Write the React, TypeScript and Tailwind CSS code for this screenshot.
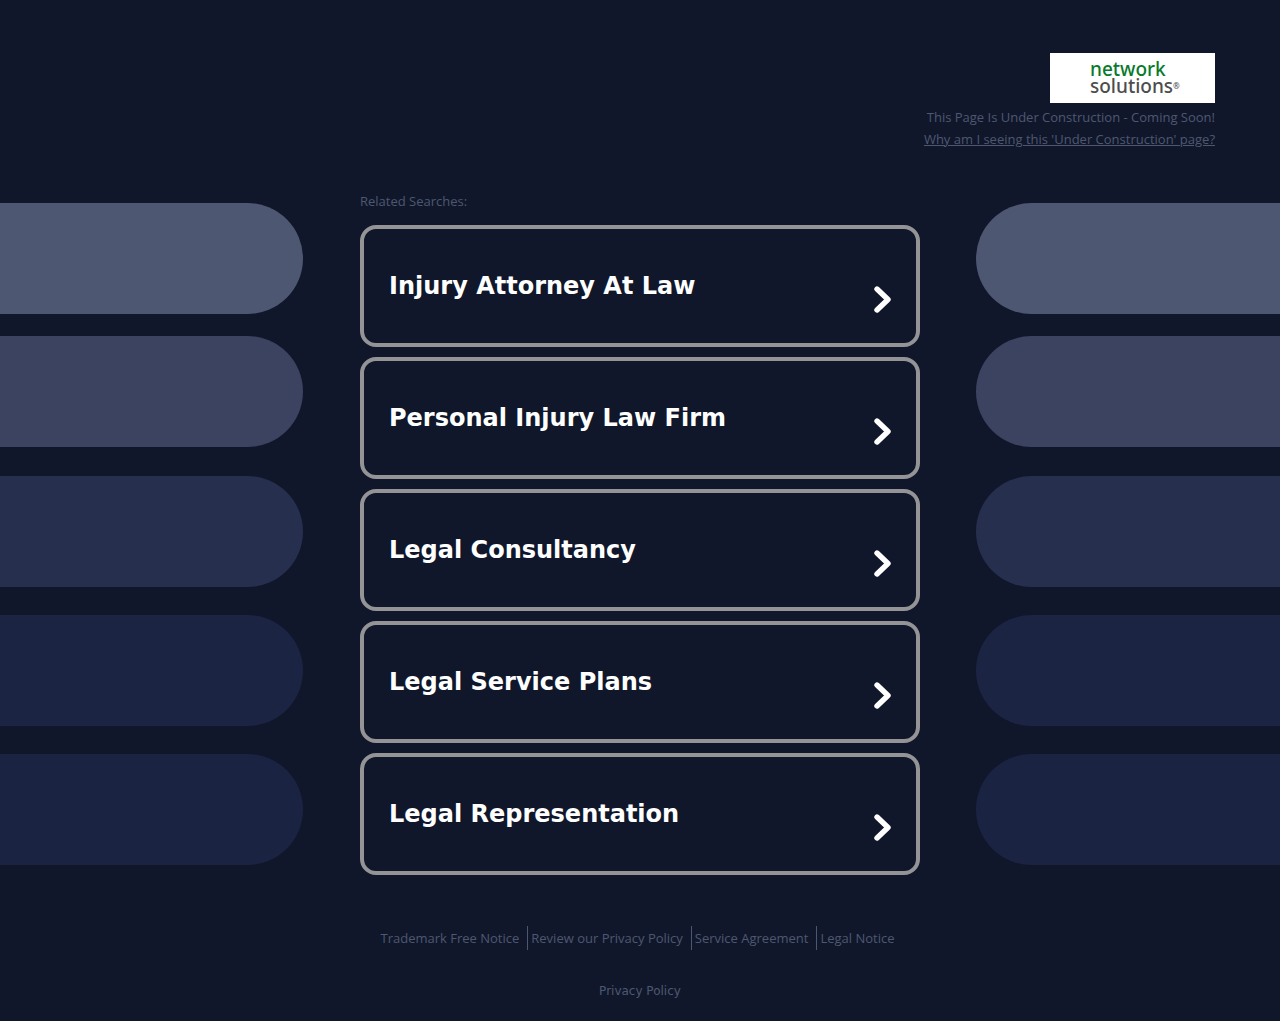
import clsx from "clsx";

const searches = [
  "Injury Attorney At Law",
  "Personal Injury Law Firm",
  "Legal Consultancy",
  "Legal Service Plans",
  "Legal Representation",
];

const footerLinks = [
  "Trademark Free Notice",
  "Review our Privacy Policy",
  "Service Agreement",
  "Legal Notice",
];

const bars = [
  "bg-[#4e5772]",
  "bg-[#3b4361] mt-[22px]",
  "bg-[#262f4e] mt-[29px]",
  "bg-[#1b2443] mt-7",
  "bg-[#1a2341] mt-7",
];

function Bars({ side }: { side: "left" | "right" }) {
  return (
    <div
      aria-hidden="true"
      className={clsx("flex flex-col pt-[19px]", side === "left" ? "pr-[57px]" : "pl-14")}
    >
      {bars.map((bar) => (
        <div
          key={bar}
          className={clsx("h-[111px]", bar, side === "left" ? "rounded-r-full" : "rounded-l-full")}
        />
      ))}
    </div>
  );
}

function Logo() {
  return (
    <div className="bg-white w-[165px] h-[50px] pl-10 pt-2 font-['Noto_Sans',sans-serif] font-medium text-[19px] leading-[17px]">
      <div className="text-[#077a2b]">network</div>
      <div className="text-[#4d4d4d] flex">
        solutions<span className="text-[8px] leading-4">®</span>
      </div>
    </div>
  );
}

function SearchCard({ title }: { title: string }) {
  return (
    <a
      href="#"
      className="flex items-center justify-between h-[122px] px-[25px] border-4 border-[#949496] rounded-2xl text-white"
    >
      <span className="font-['DejaVu_Sans',sans-serif] font-bold text-2xl">{title}</span>
      <svg className="mt-[26px]" width="17" height="27" viewBox="0 0 17 27" fill="none">
        <path
          d="M3 3L14 13.5L3 24"
          stroke="currentColor"
          strokeWidth="5.4"
          strokeLinecap="round"
          strokeLinejoin="round"
        />
      </svg>
    </a>
  );
}

export default function App() {
  return (
    <div className="min-h-screen bg-[#10172b] text-[#4e5770] font-['Open_Sans',sans-serif] font-medium text-[13px] overflow-hidden">
      {/* Header */}
      <header className="flex flex-col items-end pt-[53px] pr-[65px]">
        <Logo />
        <p className="mt-[3px] leading-[22px]">This Page Is Under Construction - Coming Soon!</p>
        <a href="#" className="underline leading-[22px]">
          Why am I seeing this 'Under Construction' page?
        </a>
      </header>

      {/* Related searches */}
      <main className="grid grid-cols-[1fr_560px_1fr] mt-[34px]">
        <Bars side="left" />
        <section>
          <h2 className="h-[41px] pt-2 leading-[18px]">Related Searches:</h2>
          <div className="flex flex-col gap-[10px]">
            {searches.map((title) => (
              <SearchCard key={title} title={title} />
            ))}
          </div>
        </section>
        <Bars side="right" />
      </main>

      {/* Footer */}
      <footer className="flex flex-col items-center pt-[51px] pb-5">
        <ul className="flex">
          {footerLinks.map((link) => (
            <li key={link} className="pl-[3px] pr-2 border-r border-[#4e5770] last:border-r-0 leading-6">
              <a href="#">{link}</a>
            </li>
          ))}
        </ul>
        <a href="#" className="mt-[31px] leading-5 text-xs font-normal font-['DejaVu_Sans',sans-serif]">
          Privacy Policy
        </a>
      </footer>
    </div>
  );
}
